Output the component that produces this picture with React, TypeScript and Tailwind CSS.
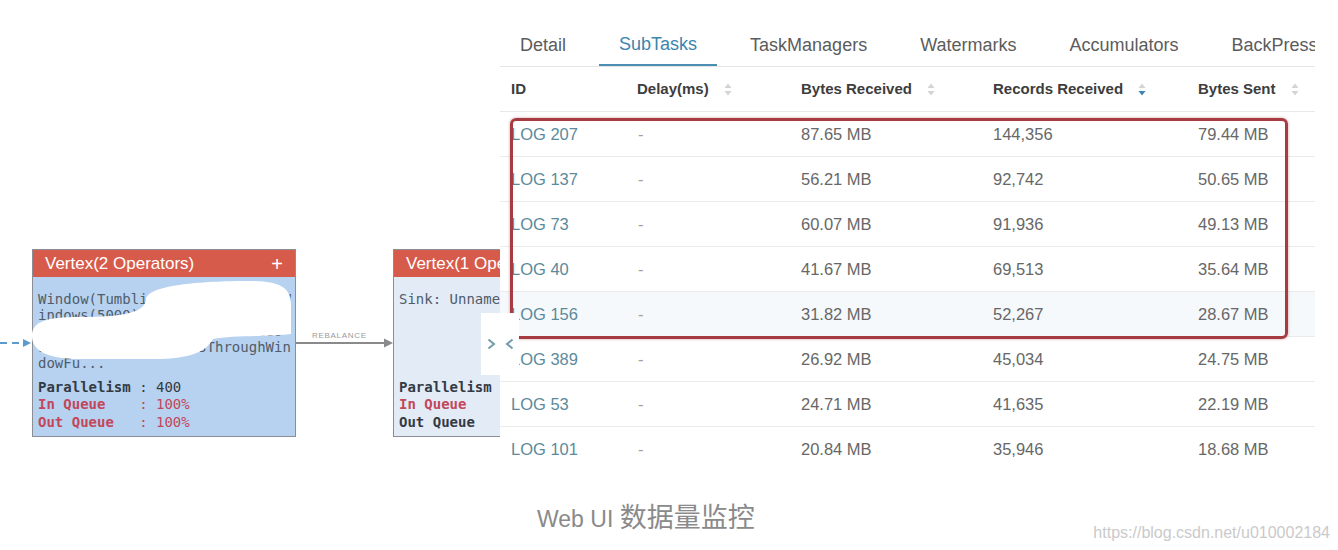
import React from 'react';

type Row = { id: string; delay: string; bytesIn: string; recordsIn: string; bytesOut: string };

const rows: Row[] = [
  { id: 'LOG 207', delay: '-', bytesIn: '87.65 MB', recordsIn: '144,356', bytesOut: '79.44 MB' },
  { id: 'LOG 137', delay: '-', bytesIn: '56.21 MB', recordsIn: '92,742', bytesOut: '50.65 MB' },
  { id: 'LOG 73', delay: '-', bytesIn: '60.07 MB', recordsIn: '91,936', bytesOut: '49.13 MB' },
  { id: 'LOG 40', delay: '-', bytesIn: '41.67 MB', recordsIn: '69,513', bytesOut: '35.64 MB' },
  { id: 'LOG 156', delay: '-', bytesIn: '31.82 MB', recordsIn: '52,267', bytesOut: '28.67 MB' },
  { id: 'LOG 389', delay: '-', bytesIn: '26.92 MB', recordsIn: '45,034', bytesOut: '24.75 MB' },
  { id: 'LOG 53', delay: '-', bytesIn: '24.71 MB', recordsIn: '41,635', bytesOut: '22.19 MB' },
  { id: 'LOG 101', delay: '-', bytesIn: '20.84 MB', recordsIn: '35,946', bytesOut: '18.68 MB' },
];

const tabs = ['Detail', 'SubTasks', 'TaskManagers', 'Watermarks', 'Accumulators', 'BackPressure'];

const cols = 'grid grid-cols-[126px_164px_192px_205px_128px]';

const SortIcon = ({ active }: { active?: boolean }) => (
  <svg width="8" height="13" viewBox="0 0 8 13" className="ml-[15px]">
    <path d="M4 0.5 L7.5 5 L0.5 5 Z" fill="#d4d4d4" />
    <path d="M4 12.5 L7.5 8 L0.5 8 Z" fill={active ? '#3d84b8' : '#d4d4d4'} />
  </svg>
);

const mono = { fontFamily: '"DejaVu Sans Mono", monospace' };

const Vertex = ({
  title,
  lines,
  body,
  outRed,
  left,
  width,
  extra,
}: {
  title: string;
  lines: string[];
  body: string;
  outRed: boolean;
  left: string;
  width: string;
  extra?: React.ReactNode;
}) => (
  <div className={`absolute top-[249px] h-[188px] ${left} ${width} border border-[#8b8e95] ${body} flex flex-col`}>
    <div className="h-[27px] bg-[#d75b4b] flex items-center justify-between pl-[12px] pr-[12px] text-white text-[17px] font-['Liberation_Sans',sans-serif] whitespace-nowrap">
      <span>{title}</span>
      {extra}
    </div>
    <div className="pl-[5px] pt-[14px] text-[14px] leading-[16px] text-[#505c6a] whitespace-pre overflow-hidden" style={mono}>
      {lines.map((l, i) => (
        <div key={i}>{l}</div>
      ))}
    </div>
    <div className="pl-[5px] mt-auto mb-[5px] text-[14px] leading-[17.5px] whitespace-pre" style={mono}>
      <div className="text-[#333a44]"><span className="font-bold">Parallelism</span> : 400</div>
      <div className="text-[#c2475a]"><span className="font-bold">In Queue</span>    : 100%</div>
      <div className={outRed ? 'text-[#c2475a]' : 'text-[#333a44]'}><span className="font-bold">Out Queue</span>   : 100%</div>
    </div>
  </div>
);

const Diagram = () => (
  <div className="relative w-[500px] h-[470px] overflow-hidden shrink-0">
    <svg className="absolute inset-0" width="500" height="470">
      <line x1="0" y1="343" x2="24" y2="343" stroke="#5b9bd0" strokeWidth="2" strokeDasharray="7 5" />
      <path d="M23 339 L31 343 L23 347 Z" fill="#5b9bd0" />
      <line x1="296" y1="343" x2="386" y2="343" stroke="#8a8a8a" strokeWidth="2" />
      <path d="M384 338.5 L393 343 L384 347.5 Z" fill="#8a8a8a" />
    </svg>
    <div className="absolute left-[312px] top-[330px] text-[8px] tracking-[0.7px] text-[#9a9a9a] font-['Liberation_Sans',sans-serif]">
      REBALANCE
    </div>

    <Vertex
      title="Vertex(2 Operators)"
      left="left-[32px]"
      width="w-[264px]"
      body="bg-[#b6d2f0]"
      outRed
      extra={<span className="text-[20px] font-light leading-none">+</span>}
      lines={[
        'Window(TumblingProcessingTimeW',
        'indows(5000), ProcessingTimeTr',
        'igger, InternalIterableProces',
        'sWindowFunction$PassThroughWin',
        'dowFu...',
      ]}
    />
    <Vertex
      title="Vertex(1 Operator)"
      left="left-[393px]"
      width="w-[190px]"
      body="bg-[#e2ebf6]"
      outRed={false}
      lines={['Sink: Unnamed']}
    />

    {/* scribbled-out part of the operator name */}
    <svg className="absolute inset-0" width="500" height="470">
      <path
        d="M146 300 C146 285 200 281 250 281 C282 281 291 289 291 305 L291 334 C268 337 232 335 213 339 C206 352 190 358 160 359 L80 359 C44 359 32 349 32 336 C32 322 45 317 80 317 C118 317 144 314 146 300 Z"
        fill="#ffffff"
      />
    </svg>
  </div>
);

const Panel = () => (
  <div className="relative w-[815px] h-[440px] mt-[20px] bg-white overflow-hidden font-['Liberation_Sans',sans-serif]">
    <div className="flex h-[47px] gap-[13px] border-b border-[#e6e6e6] whitespace-nowrap">
      {tabs.map(t => (
        <div
          key={t}
          className={`h-full flex items-center px-[20px] pt-[5px] text-[18px] ${t === 'SubTasks' ? 'text-[#3c85ae] border-b-2 border-[#4b8db3]' : 'text-[#5c5c5c]'}`}
        >
          {t}
        </div>
      ))}
    </div>

    <div className={`${cols} h-[45px] border-b border-[#e8e8e8] text-[15px] font-bold text-[#3d3d3d]`}>
      <div className="flex items-center pl-[11px]">ID</div>
      <div className="flex items-center pl-[11px]">Delay(ms)<SortIcon /></div>
      <div className="flex items-center pl-[11px]">Bytes Received<SortIcon /></div>
      <div className="flex items-center pl-[11px]">Records Received<SortIcon active /></div>
      <div className="flex items-center pl-[11px] whitespace-nowrap">Bytes Sent<SortIcon /></div>
    </div>

    {rows.map((r, i) => (
      <div
        key={r.id}
        className={`${cols} h-[45px] border-b border-[#ebebeb] text-[16.5px] text-[#676767] ${i === 4 ? 'bg-[#f6f9fc]' : ''}`}
      >
        <div className="flex items-center pl-[11px] text-[#5b8a9b]">{r.id}</div>
        <div className="flex items-center pl-[12px] text-[#a0a0a0]">{r.delay}</div>
        <div className="flex items-center pl-[11px]">{r.bytesIn}</div>
        <div className="flex items-center pl-[11px]">{r.recordsIn}</div>
        <div className="flex items-center pl-[11px]">{r.bytesOut}</div>
      </div>
    ))}

    {/* highlight box drawn over the top five rows */}
    <div className="absolute left-[10px] top-[98px] w-[778px] h-[221px] border-[3px] border-[#a63c41] rounded-[6px] shadow-[0_0_3px_rgba(166,60,65,0.5)]" />
  </div>
);

export default function App() {
  return (
    <div className="relative w-[1338px] h-[550px] bg-white overflow-hidden">
      <div className="flex h-[470px]">
        <Diagram />
        <Panel />
      </div>

      {/* collapse / expand toggle between graph and panel */}
      <div className="absolute left-[481px] top-[313px] w-[38px] h-[62px] bg-white flex items-center justify-center gap-[9px]">
        <svg width="9" height="12" viewBox="0 0 9 12">
          <path d="M1.5 1.5 L7 6 L1.5 10.5" fill="none" stroke="#6f9dac" strokeWidth="2" />
        </svg>
        <svg width="9" height="12" viewBox="0 0 9 12">
          <path d="M7.5 1.5 L2 6 L7.5 10.5" fill="none" stroke="#6f9dac" strokeWidth="2" />
        </svg>
      </div>

      <div className="flex items-start h-[80px]">
        <div className="mt-[33px] ml-[537px] text-[23px] leading-[30px] text-[#8a8a8a] font-['Liberation_Sans','Noto_Sans_CJK_SC',sans-serif] whitespace-nowrap">
          Web UI <span className="text-[27px]">数据量监控</span>
        </div>
        <div className="mt-[51px] ml-auto mr-[8px] text-[16px] text-[#cacaca] font-['Liberation_Sans',sans-serif]">
          https://blog.csdn.net/u010002184
        </div>
      </div>
    </div>
  );
}
